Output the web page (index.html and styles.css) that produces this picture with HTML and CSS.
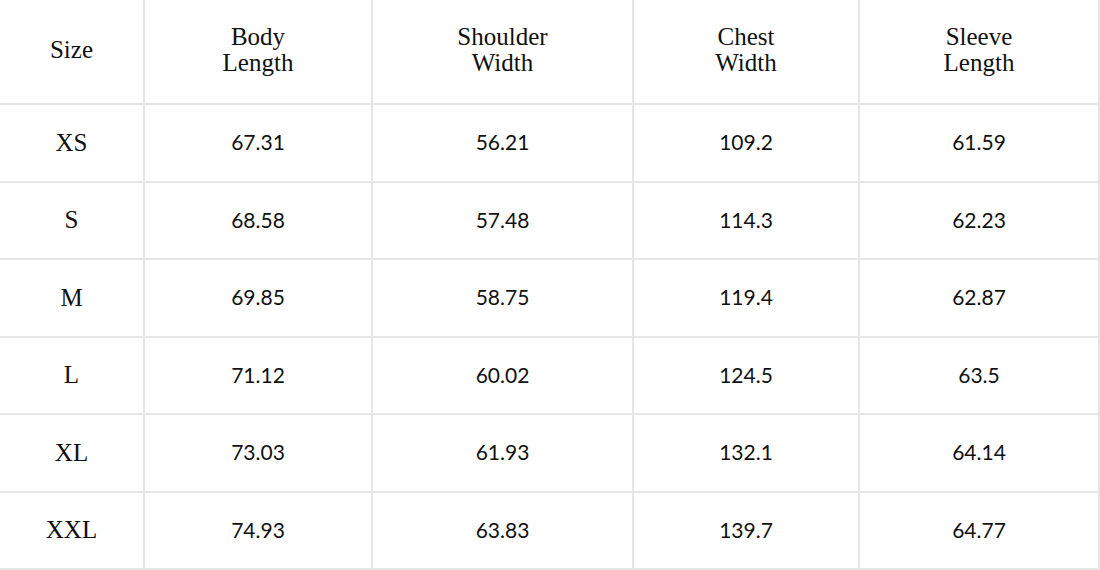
FILE: index.html
```html
<!DOCTYPE html>
<html lang="en">
<head>
<meta charset="utf-8">
<title>Size Chart</title>
<link rel="stylesheet" href="styles.css">
</head>
<body>
<div class="chart" role="table">
  <div class="row head" role="row">
    <div class="cell hd" role="columnheader">Size</div>
    <div class="cell hd" role="columnheader">Body<br>Length</div>
    <div class="cell hd" role="columnheader">Shoulder<br>Width</div>
    <div class="cell hd" role="columnheader">Chest<br>Width</div>
    <div class="cell hd" role="columnheader">Sleeve<br>Length</div>
  </div>
  <div class="row" role="row">
    <div class="cell sz" role="rowheader">XS</div>
    <div class="cell num" role="cell">67.31</div>
    <div class="cell num" role="cell">56.21</div>
    <div class="cell num" role="cell">109.2</div>
    <div class="cell num" role="cell">61.59</div>
  </div>
  <div class="row" role="row">
    <div class="cell sz" role="rowheader">S</div>
    <div class="cell num" role="cell">68.58</div>
    <div class="cell num" role="cell">57.48</div>
    <div class="cell num" role="cell">114.3</div>
    <div class="cell num" role="cell">62.23</div>
  </div>
  <div class="row" role="row">
    <div class="cell sz" role="rowheader">M</div>
    <div class="cell num" role="cell">69.85</div>
    <div class="cell num" role="cell">58.75</div>
    <div class="cell num" role="cell">119.4</div>
    <div class="cell num" role="cell">62.87</div>
  </div>
  <div class="row" role="row">
    <div class="cell sz" role="rowheader">L</div>
    <div class="cell num" role="cell">71.12</div>
    <div class="cell num" role="cell">60.02</div>
    <div class="cell num" role="cell">124.5</div>
    <div class="cell num" role="cell">63.5</div>
  </div>
  <div class="row" role="row">
    <div class="cell sz" role="rowheader">XL</div>
    <div class="cell num" role="cell">73.03</div>
    <div class="cell num" role="cell">61.93</div>
    <div class="cell num" role="cell">132.1</div>
    <div class="cell num" role="cell">64.14</div>
  </div>
  <div class="row" role="row">
    <div class="cell sz" role="rowheader">XXL</div>
    <div class="cell num" role="cell">74.93</div>
    <div class="cell num" role="cell">63.83</div>
    <div class="cell num" role="cell">139.7</div>
    <div class="cell num" role="cell">64.77</div>
  </div>
</div>
</body>
</html>
```

FILE: styles.css
```css
html, body {
  margin: 0;
  padding: 0;
  background: #ffffff;
}

.chart {
  width: 1100px;
  height: 570px;
  display: grid;
  grid-template-rows: 105px repeat(6, 1fr);
  color: #111111;
}

.row {
  display: grid;
  grid-template-columns: 145px 228px 261px 226px 240px;
}

.cell {
  box-sizing: border-box;
  border-right: 2px solid #e6e6e6;
  border-bottom: 2px solid #e6e6e6;
  display: flex;
  align-items: center;
  justify-content: center;
  text-align: center;
}

.hd,
.sz {
  font-family: "Liberation Serif", "Times New Roman", serif;
  font-size: 25px;
  line-height: 26px;
}

.hd {
  padding-bottom: 3px;
}

.num {
  font-family: Lato, "Noto Sans", sans-serif;
  font-size: 21px;
  line-height: 26px;
  padding-bottom: 1px;
}
```
